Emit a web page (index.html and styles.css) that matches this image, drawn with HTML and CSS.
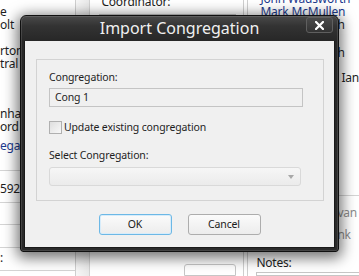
FILE: index.html
```html
<!DOCTYPE html>
<html>
<head>
<meta charset="utf-8">
<link rel="stylesheet" href="styles.css">
</head>
<body>
<div class="app">
  <div class="col1">
    <div class="blk b1"><div class="ln">e</div><div class="ln">olt</div></div>
    <div class="blk b2"><div class="ln">rton</div><div class="ln">tral</div></div>
    <div class="blk b3"><div class="ln">nhar</div><div class="ln">ord</div></div>
    <div class="blk b4"><div class="ln link">egat</div></div>
    <div class="rule r1"></div>
    <div class="blk b5"><div class="ln">592</div></div>
    <div class="rule r2"></div>
    <div class="rule r3"></div>
    <div class="rule r4"></div>
    <div class="blk b6"><div class="ln">:</div></div>
    <div class="rule r5"></div>
  </div>
  <div class="splitter"></div>
  <div class="col2">
    <div class="ln coord">Coordinator:</div>
    <div class="field"></div>
    <div class="rule r6"></div>
    <div class="smallbtn"></div>
  </div>
  <div class="col3">
    <div class="ln link john">John Wadsworth</div>
    <div class="ln link">Mark McMullen</div>
    <div class="edge">
      <div class="ln">h</div>
      <div class="ln e2">h</div>
      <div class="ln e3">Ian</div>
      <div class="rule r7"></div>
      <div class="ln dim e4">van</div>
      <div class="ln dim e5">nk</div>
    </div>
    <div class="ln notes">Notes:</div>
    <div class="notesbox"></div>
  </div>
</div>

<div class="dialog">
  <div class="titlebar">
    <div></div>
    <div class="title">Import Congregation</div>
    <div class="close">
      <svg width="9" height="9" viewBox="0 0 9 9"><path d="M1 1 L8 8 M8 1 L1 8" stroke="#ffffff" stroke-width="2.2" stroke-linecap="square"/></svg>
    </div>
  </div>
  <div class="content">
    <div class="group">
      <div class="lbl">Congregation:</div>
      <div class="textbox">Cong 1</div>
      <div class="checkrow">
        <span class="checkbox"></span>
        <span class="lbl">Update existing congregation</span>
      </div>
      <div class="lbl sel">Select Congregation:</div>
      <div class="combo"><span class="arrow"></span></div>
    </div>
    <div class="buttons">
      <div class="btn ok">OK</div>
      <div class="btn">Cancel</div>
    </div>
  </div>
</div>
</body>
</html>
```
FILE: styles.css
```css
html, body {
  margin: 0;
  padding: 0;
}
body {
  width: 359px;
  height: 276px;
  overflow: hidden;
  background: #ffffff;
  font-family: "Noto Sans", "Open Sans", sans-serif;
  position: relative;
}
.app {
  display: flex;
  height: 276px;
  font-size: 12px;
  letter-spacing: -0.2px;
  color: #1e1e1e;
}
.ln {
  line-height: 13px;
  white-space: nowrap;
}
.link { color: #1c3a8e; }
.dim { color: #8c8c8c; }
.rule { height: 1px; background: #d4d4d4; }

.col1 {
  width: 75px;
  border-right: 1px solid #cfcfcf;
  display: flex;
  flex-direction: column;
}
.b1 { margin-top: 5px; }
.b2 { margin-top: 13px; }
.b3 { margin-top: 37px; }
.b4 { margin-top: 6px; }
.r1 { margin-top: 18px; }
.b5 { margin-top: 11px; }
.r2 { margin-top: 7px; }
.r3 { margin-top: 21px; }
.r4 { margin-top: 22px; }
.b6 { margin-top: 3px; }
.r5 { margin-top: 6px; }

.splitter {
  width: 14px;
  background: linear-gradient(90deg, #f7f7f7, #e9e9e9);
  border-right: 1px solid #d2d2d2;
}
.col2 {
  width: 154px;
  border-right: 1px solid #cfcfcf;
  display: flex;
  flex-direction: column;
}
.coord {
  margin-top: -5px;
  padding-left: 11px;
}
.field {
  margin: 6px 0 0 9px;
  width: 137px;
  height: 230px;
  border-top: 1px solid #c8c8c8;
}
.r6 { margin-top: 2px; }
.smallbtn {
  margin: 16px 0 0 94px;
  width: 50px;
  height: 10px;
  border: 1px solid #c6c6c6;
  border-radius: 3px 3px 0 0;
}
.col3 {
  flex: 1;
  margin-left: 3px;
  border-left: 1px solid #cfcfcf;
  display: flex;
  flex-direction: column;
}
.col3 > .ln { padding-left: 12px; }
.john { margin-top: -8px; }
.edge {
  margin-left: 89px;
  display: flex;
  flex-direction: column;
}
.e2 { margin-top: 15px; }
.e3 { margin-top: 12px; padding-left: 4px; }
.r7 { margin-top: 111px; }
.e4 { margin-top: 10px; }
.e5 { margin-top: 9px; }
.col3 > .notes { margin-top: 15px; padding-left: 8px; }
.notesbox {
  margin: 3px 0 0 8px;
  height: 10px;
  border: 1px solid #c6c6c6;
  border-right: none;
}

/* dialog overlay */
.dialog {
  position: absolute;
  left: 20px;
  top: 15px;
  width: 319px;
  height: 237px;
  box-sizing: border-box;
  border: 1px solid #101010;
  border-radius: 6px 6px 3px 3px;
  background: linear-gradient(180deg, #4a4a4a 0px, #333333 10px, #272727 25px, #2b2b2b 100%);
  box-shadow: inset 0 0 0 1px rgba(255,255,255,0.12), 0 3px 14px 3px rgba(0,0,0,0.55);
  padding: 0 4px 4px 4px;
  display: flex;
  flex-direction: column;
}
.titlebar {
  height: 25px;
  display: grid;
  grid-template-columns: 1fr auto 1fr;
  align-items: start;
}
.title {
  font-size: 16px;
  line-height: 25px;
  color: #f0f0f0;
  white-space: nowrap;
}
.close {
  justify-self: end;
  margin-top: 1px;
  margin-right: 1px;
  width: 27px;
  height: 16px;
  box-sizing: border-box;
  border: 1px solid #5f5f5f;
  border-radius: 3px;
  background: linear-gradient(180deg, #4a4a4a, #333333);
  display: flex;
  align-items: center;
  justify-content: center;
}
.close svg { display: block; }
.content {
  flex: 1;
  background: #f0f0f0;
  border: 1px solid #1a1a1a;
  border-top: none;
  margin: 0 -1px -1px -1px;
  display: flex;
  flex-direction: column;
  padding: 18px 0 0 11px;
  font-size: 10.5px;
  letter-spacing: -0.15px;
  color: #1e1e1e;
}
.group {
  width: 288px;
  box-sizing: border-box;
  border: 1px solid #d3d3d3;
  padding: 10px 0 14px 12px;
  display: flex;
  flex-direction: column;
}
.lbl {
  line-height: 14px;
  white-space: nowrap;
}
.textbox {
  margin-top: 4px;
  width: 254px;
  height: 19px;
  box-sizing: border-box;
  border: 1px solid #c4c4c4;
  background: #f0f0f0;
  line-height: 17px;
  padding-left: 5px;
}
.checkrow {
  margin-top: 13px;
  display: flex;
  align-items: flex-start;
  gap: 2px;
}
.checkbox {
  margin-top: 1px;
  width: 13px;
  height: 13px;
  box-sizing: border-box;
  border: 1px solid #b0b0b0;
  background: linear-gradient(135deg, #dedede, #f8f8f8);
}
.sel { margin-top: 14px; }
.combo {
  margin-top: 5px;
  width: 252px;
  height: 19px;
  box-sizing: border-box;
  border: 1px solid #d9d9d9;
  border-radius: 3px;
  background: linear-gradient(180deg, #f6f6f6, #ebebeb);
  display: flex;
  justify-content: flex-end;
  align-items: center;
  padding-right: 6px;
}
.arrow {
  width: 0;
  height: 0;
  border-left: 3.5px solid transparent;
  border-right: 3.5px solid transparent;
  border-top: 4px solid #a8a8a8;
}
.buttons {
  margin: 13px 0 0 -11px;
  display: flex;
  justify-content: center;
  gap: 16px;
}
.btn {
  width: 73px;
  height: 21px;
  box-sizing: border-box;
  border: 1px solid #adadad;
  border-radius: 3px;
  background: linear-gradient(180deg, #fbfbfb, #ececec);
  text-align: center;
  line-height: 19px;
  color: #1a1a1a;
}
.ok {
  border-color: #6cb8e6;
  box-shadow: inset 0 0 0 1px #d7ecfa;
}
```
